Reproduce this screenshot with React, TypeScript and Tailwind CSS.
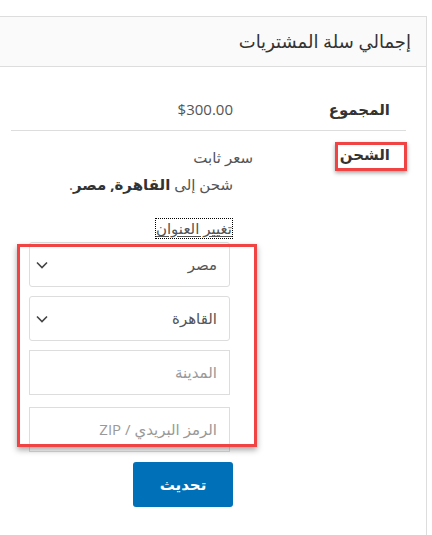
import React from 'react';

const font = "font-['Open_Sans','DejaVu_Sans',sans-serif]";

const Chevron = () => (
  <svg width="12" height="8" viewBox="0 0 12 8" fill="none" stroke="#444" strokeWidth="1.6">
    <path d="M1 1.5l5 5 5-5" />
  </svg>
);

const SelectBox = ({ value }: { value: string }) => (
  <div className="flex h-[45px] items-center justify-between rounded-[3px] border border-[#ddd] bg-white pr-3 pl-[6px] text-[15px] text-[#555]">
    <span>{value}</span>
    <Chevron />
  </div>
);

const TextBox = ({ placeholder }: { placeholder: string }) => (
  <div className="flex h-[45px] items-center border border-[#ddd] bg-white pr-3 text-[15px] text-[#999]">
    <span>{placeholder}</span>
  </div>
);

export default function App() {
  return (
    <div dir="rtl" className={`${font} h-[535px] bg-white pt-4 text-[#333]`}>
      <div className="mr-[5px] min-h-[519px] border border-l-0 border-b-0 border-[#ddd]">
        <div className="flex h-[50px] items-center border-b border-[#ddd] bg-[#fafafa] pr-[15px] text-[18px]">
          إجمالي سلة المشتريات
        </div>

        <div className="mt-[21px] mr-[20px] ml-[11px]">
          <div className="flex border-b border-[#ddd] pt-[10px] pb-[10px] text-[15px] leading-[22px]">
            <div className="w-[173px] pr-4 font-semibold">المجموع</div>
            <div className="flex-1 text-[#555]">$300.00</div>
          </div>

          <div className="flex pt-[12px] text-[15px]">
            <div className="relative w-[173px] pr-4 leading-[22px] font-semibold">
              الشحن
              <div className="absolute top-[-1px] right-[-1px] h-[29px] w-[72px] border-[3px] border-[#f04343] shadow-[0_2px_4px_rgba(0,0,0,0.35)]" />
            </div>
            <div className="flex-1 text-[#555]">
              <div className="-mr-5 pt-[3px] leading-[22px]">سعر ثابت</div>
              <div className="mt-[5px] leading-[22px]">
                شحن إلى <strong className="text-[#333]">القاهرة, مصر</strong>.
              </div>
              <div className="mt-[23px] flex">
                <span className="border border-dotted border-black leading-[19px] underline decoration-[#555] underline-offset-2">
                  تغيير العنوان
                </span>
              </div>

              <div className="relative mt-[3px] mr-[3px] flex w-[201px] flex-col">
                <SelectBox value="مصر" />
                <div className="mt-[9px]">
                  <SelectBox value="القاهرة" />
                </div>
                <div className="mt-[9px]">
                  <TextBox placeholder="المدينة" />
                </div>
                <div className="mt-[12px]">
                  <TextBox placeholder="الرمز البريدي / ZIP" />
                </div>
                <div className="pointer-events-none absolute top-[2px] right-[-27px] bottom-[5px] left-[-12px] border-[3px] border-[#f04343] shadow-[0_3px_6px_rgba(0,0,0,0.35)]" />
              </div>

              <button className="mt-[10px] h-[45px] w-[100px] rounded-[3px] bg-[#0071b9] text-[15px] font-bold text-white">
                تحديث
              </button>
            </div>
          </div>
        </div>
      </div>
    </div>
  );
}
